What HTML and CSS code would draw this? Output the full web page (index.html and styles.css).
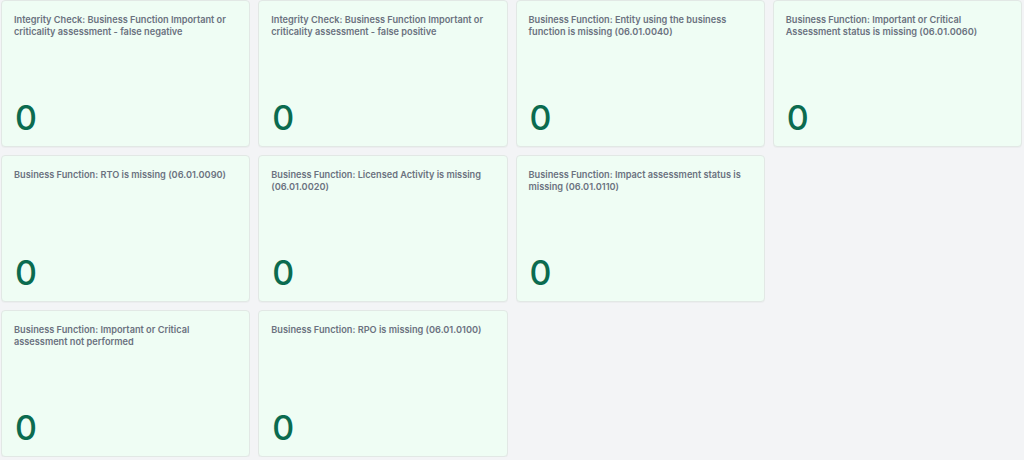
FILE: index.html
```html
<!DOCTYPE html>
<html lang="en">
<head>
<meta charset="utf-8">
<title>Business Function Checks</title>
<link rel="stylesheet" href="styles.css">
</head>
<body>
<main class="grid">
  <div class="card"><div class="title">Integrity Check: Business Function Important or criticality assessment - false negative</div><div class="value">0</div></div>
  <div class="card"><div class="title">Integrity Check: Business Function Important or criticality assessment - false positive</div><div class="value">0</div></div>
  <div class="card"><div class="title">Business Function: Entity using the business function is missing (06.01.0040)</div><div class="value">0</div></div>
  <div class="card"><div class="title">Business Function: Important or Critical Assessment status is missing (06.01.0060)</div><div class="value">0</div></div>
  <div class="card"><div class="title">Business Function: RTO is missing (06.01.0090)</div><div class="value">0</div></div>
  <div class="card"><div class="title">Business Function: Licensed Activity is missing (06.01.0020)</div><div class="value">0</div></div>
  <div class="card"><div class="title">Business Function: Impact assessment status is missing (06.01.0110)</div><div class="value">0</div></div>
  <div class="spacer"></div>
  <div class="card"><div class="title">Business Function: Important or Critical assessment not performed</div><div class="value">0</div></div>
  <div class="card"><div class="title">Business Function: RPO is missing (06.01.0100)</div><div class="value">0</div></div>
</main>
</body>
</html>
```
FILE: styles.css
```css
html, body {
  margin: 0;
  padding: 0;
  background: #f3f4f6;
  font-family: Inter, "Noto Sans", sans-serif;
}
.grid {
  display: grid;
  grid-template-columns: repeat(4, 1fr);
  grid-auto-rows: 147px;
  gap: 8px;
  padding: 0 2px 0 1px;
}
.card {
  background: #effdf4;
  border: 1px solid #e2e8e5;
  border-radius: 4px;
  padding: 12px;
  display: flex;
  flex-direction: column;
  justify-content: space-between;
  box-shadow: 0 1px 1px rgba(0, 0, 0, 0.03);
}
.title {
  font-size: 9.2px;
  line-height: 12px;
  font-weight: 600;
  color: #6b7280;
  padding-top: 1px;
}
.value {
  font-size: 34px;
  line-height: 33px;
  font-weight: 500;
  color: #0b6b4f;
  padding-left: 1px;
}
```
